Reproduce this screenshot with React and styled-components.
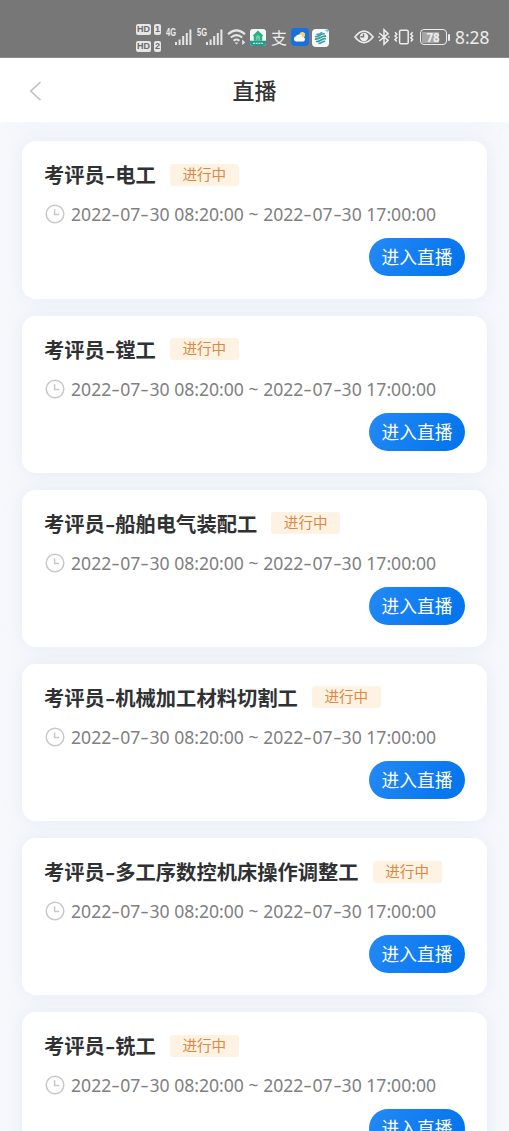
import React from "react";
import styled, { createGlobalStyle } from "styled-components";

const LIVE_LIST = [
  { id: 1, role: "考评员", job: "电工" },
  { id: 2, role: "考评员", job: "镗工" },
  { id: 3, role: "考评员", job: "船舶电气装配工" },
  { id: 4, role: "考评员", job: "机械加工材料切割工" },
  { id: 5, role: "考评员", job: "多工序数控机床操作调整工" },
  { id: 6, role: "考评员", job: "铣工" },
];

const START = { date: "2022-07-30", time: "08:20:00" };
const END = { date: "2022-07-30", time: "17:00:00" };

const Signal = () => (
  <svg width="18" height="17" viewBox="0 0 18 17" fill="#e6e6e6">
    <rect x="0" y="13" width="2" height="3" />
    <rect x="3.6" y="10.5" width="2" height="5.5" />
    <rect x="7.2" y="7" width="2" height="9" />
    <rect x="10.8" y="4" width="2" height="12" />
    <rect x="14.4" y="0.5" width="2" height="15.5" />
  </svg>
);

const Wifi = () => (
  <svg width="20" height="18" viewBox="0 0 20 18" fill="none" stroke="#e6e6e6" strokeWidth="2">
    <path d="M1 6.2Q9.5-1.4 18 6.2M3.8 9.6q5.7-5 11.4 0M6.6 12.7q2.9-2.4 5.8 0" />
    <path d="M7.7 14.4h3.6l-1.8 2.2z" fill="#e6e6e6" stroke="none" />
    <path d="m15.2 11.6 3 2.8-3 2.6z" fill="#e6e6e6" stroke="none" />
  </svg>
);

const HomeApp = () => (
  <svg width="16" height="17" viewBox="0 0 16 17">
    <rect width="16" height="17" rx="3" fill="#f0f8f4" />
    <path d="m8 1.6 5.2 4.8-1 1v4.4H3.8V7.4l-1-1z" fill="#31ad83" />
    <path d="M8 5.8 6 7.8v4h1.4V9.5h1.2v2.3H10v-4z" fill="#6fceab" />
    <path d="M0 11.8h16V14a3 3 0 0 1-3 3H3a3 3 0 0 1-3-3z" fill="#269b8b" />
    <path d="M3 14.3h10" stroke="#b9e6da" strokeWidth="1.3" strokeDasharray="2 .7" />
  </svg>
);

const WeatherApp = () => (
  <svg width="18" height="18" viewBox="0 0 18 18">
    <rect width="18" height="18" rx="4" fill="#1871df" />
    <circle cx="11.3" cy="6.8" r="2.8" fill="#f8d567" />
    <path d="M5.2 13.4a2.6 2.6 0 0 1-.3-5.1 3.5 3.5 0 0 1 6.5.9 2.1 2.1 0 1 1 .9 4.2z" fill="#fff" />
  </svg>
);

const MobileApp = () => (
  <svg width="18" height="19" viewBox="0 0 18 19">
    <rect y="1" width="17" height="18" rx="4" fill="#f5faf9" />
    <g fill="none" strokeWidth="1.7" strokeLinecap="round">
      <path d="M3.6 8.5c3 1 5.2-3.2 8.4-2.7M3.5 11.1c4 .7 6.2-3.8 9.9-2.9M4.7 13.5c3.6.4 5.6-3.9 8.7-2.8" stroke="#359c91" />
      <path d="M5 6.3c2 .7 3.2-1.1 4.8-1.4M7 15.3c2.2 0 3.7-2.3 5.5-1.9" stroke="#4c9fc6" />
    </g>
    <path d="m15.2 0 .7 1.8 1.9.7-1.9.7-.7 1.9-.7-1.9-1.9-.7 1.9-.7z" fill="#73cae9" />
  </svg>
);

const Eye = () => (
  <svg width="20" height="14" viewBox="0 0 20 14">
    <path d="M1 7q9-11.6 18 0Q10 18.2 1 7z" fill="none" stroke="#ededed" strokeWidth="1.7" />
    <circle cx="10" cy="7" r="4.2" fill="#ededed" />
    <path d="M9.5 3.7v3.1H6.4" fill="none" stroke="#777" strokeWidth="1.5" />
  </svg>
);

const Bluetooth = () => (
  <svg width="12" height="18" viewBox="0 0 12 18" fill="none" stroke="#ededed" strokeWidth="1.5">
    <path d="m1.3 5 8.8 7.4L6 16.3V1.7l4.1 3.9L1.3 13" />
    <path d="M.3 9h1.5M10.2 9h1.5" />
  </svg>
);

const Vibrate = () => (
  <svg width="20" height="16" viewBox="0 0 20 16" fill="none" stroke="#ededed" strokeWidth="1.5">
    <rect x="5.6" y="1.2" width="8.6" height="13.6" rx="1.3" />
    <path d="m1 3.3 1.8 1.9L1 7l1.8 1.8L1 10.6l1.8 1.9M18.6 3.3l-1.8 1.9L18.6 7l-1.8 1.8 1.8 1.8-1.8 1.9" />
  </svg>
);

const Clock = () => (
  <svg width="20" height="20" viewBox="0 0 20 20" fill="none" stroke="#c8c8c8" strokeWidth="1.5">
    <circle cx="10" cy="10" r="8.8" />
    <path d="M9.6 5.3v5.2h4.6" />
  </svg>
);

const BackArrow = () => (
  <svg width="14" height="22" viewBox="0 0 14 22" fill="none" stroke="#c4c4c4" strokeWidth="1.7">
    <path d="M12.5 2 2.7 11.1l9.8 9.1" />
  </svg>
);

// 日期中的连字符需要加宽
const DateText = ({ value }) =>
  value.split("-").map((part, index) => (
    <React.Fragment key={index}>
      {index > 0 && <Dash $width={9} $scale={1.5}>-</Dash>}
      {part}
    </React.Fragment>
  ));

const LiveCard = ({ role, job }) => (
  <Card>
    <TitleRow>
      <Title>
        {role}
        <Dash $width={10.4} $scale={1.4}>-</Dash>
        {job}
      </Title>
      <Tag>进行中</Tag>
    </TitleRow>
    <TimeRow>
      <Clock />
      <Time>
        <DateText value={START.date} /> {START.time} ~ <DateText value={END.date} /> {END.time}
      </Time>
    </TimeRow>
    <EnterButton>进入直播</EnterButton>
  </Card>
);

const App = () => (
  <Page>
    <GlobalStyle />
    <StatusBar>
      <SimCards>
        <Sim><b>HD</b><i>1</i></Sim>
        <Sim><b>HD</b><i>2</i></Sim>
      </SimCards>
      <Network>4G</Network>
      <Signal />
      <Network>5G</Network>
      <Signal />
      <Slot $left={3}><Wifi /></Slot>
      <Slot $left={3}><HomeApp /></Slot>
      <Pay>支</Pay>
      <Slot $left={4}><WeatherApp /></Slot>
      <Slot $left={3}><MobileApp /></Slot>
      <Slot $left={24}><Eye /></Slot>
      <Slot $left={4}><Bluetooth /></Slot>
      <Slot $left={4}><Vibrate /></Slot>
      <Battery><span>78</span></Battery>
      <BatteryTip />
      <Now>8:28</Now>
    </StatusBar>
    <Header>
      <BackButton><BackArrow /></BackButton>
      <HeaderTitle>直播</HeaderTitle>
    </Header>
    <List>
      <CardEnd />
      {LIVE_LIST.map((item) => (
        <LiveCard key={item.id} role={item.role} job={item.job} />
      ))}
    </List>
  </Page>
);

export default App;

const GlobalStyle = createGlobalStyle`
  body {
    margin: 0;
    font-family: "Noto Sans CJK SC", sans-serif;
  }
  * {
    box-sizing: border-box;
  }
  svg {
    display: block;
    flex: none;
  }
`;

const Page = styled.div`
  display: flex;
  flex-direction: column;
  height: 1131px;
  overflow: hidden;
  background: #f6f8fc;
`;

const StatusBar = styled.div`
  display: flex;
  align-items: center;
  flex: none;
  height: 58px;
  padding: 17px 0 0 136px;
  background: #777777;
  border-bottom: 1px solid #8b8b8b;
  color: #ededed;
`;

const SimCards = styled.div`
  display: flex;
  flex-direction: column;
  gap: 6px;
  width: 26px;
  padding-top: 1px;
`;

const Sim = styled.div`
  display: flex;
  gap: 3px;
  height: 11px;
  font: 700 9px/11px "Liberation Sans", sans-serif;
  color: #6c6c6c;

  b, i {
    background: #e6e6e6;
    border-radius: 2px;
    text-align: center;
    font-style: normal;
  }
  b {
    width: 15px;
  }
  i {
    width: 7px;
  }
`;

const Network = styled.span`
  width: 9px;
  margin: 0 0 9px 4px;
  font: 700 10px/10px "Liberation Sans Narrow", "Liberation Sans", sans-serif;
  white-space: nowrap;
  transform: scaleX(0.75);
  transform-origin: left;
`;

const Slot = styled.span`
  margin-left: ${(props) => props.$left}px;
`;

const Pay = styled.span`
  margin-left: 5px;
  width: 16px;
  font-size: 16px;
  line-height: 20px;
`;

const Battery = styled.div`
  display: flex;
  align-items: center;
  flex: none;
  width: 27px;
  height: 16px;
  margin-left: 6px;
  padding: 1px;
  border: 1.5px solid #ededed;
  border-radius: 4px;

  span {
    width: 22px;
    height: 11px;
    background: linear-gradient(90deg, #a5a5a5 78%, transparent 78%);
    border-radius: 1px;
    text-align: center;
    font: 700 11.5px/11px "Noto Sans", sans-serif;
  }
`;

const BatteryTip = styled.div`
  width: 2px;
  height: 7px;
  margin-left: 1px;
  border-radius: 1px;
  background: #ededed;
`;

const Now = styled.div`
  margin-left: 5px;
  padding-top: 2px;
  font: 400 17.3px/22px "Noto Sans", sans-serif;
`;

const Header = styled.header`
  display: grid;
  grid-template-columns: 60px 1fr 60px;
  align-items: center;
  flex: none;
  height: 64px;
  background: #ffffff;
`;

const BackButton = styled.button`
  display: flex;
  padding: 1px 0 0 28px;
  border: 0;
  background: none;
`;

const HeaderTitle = styled.h1`
  margin: 0 0 2px;
  text-align: center;
  font-size: 22px;
  font-weight: 500;
  line-height: 32px;
  color: #333333;
`;

const List = styled.main`
  display: flex;
  flex-direction: column;
  gap: 17px;
  flex: 1;
  min-height: 0;
  padding: 0 22px;
  overflow: hidden;
`;

const Card = styled.section`
  display: flex;
  flex-direction: column;
  flex: none;
  height: 157.2px;
  padding: 19px 22px 0;
  border-radius: 14px;
  background: #ffffff;
  box-shadow: 0 0 18px rgba(206, 216, 234, 0.38);
`;

// 上一张卡片滚动后露出的底边
const CardEnd = styled.div`
  flex: none;
  height: 2.4px;
  background: #f5f6fc;
  box-shadow: 0 0 18px rgba(200, 208, 244, 0.5);
`;

const TitleRow = styled.div`
  display: flex;
  align-items: center;
  height: 28px;
`;

const Title = styled.h2`
  margin: 0;
  font-size: 20.3px;
  font-weight: 700;
  line-height: 28px;
  white-space: nowrap;
  color: #303133;
`;

const Dash = styled.span`
  display: inline-block;
  width: ${(props) => props.$width}px;
  text-align: center;
  transform: scaleX(${(props) => props.$scale});
`;

const Tag = styled.span`
  width: 69px;
  height: 22px;
  margin: 1px 0 0 14px;
  border-radius: 3px;
  background: #fef3e2;
  color: #dd8645;
  text-align: center;
  font-size: 14.6px;
  line-height: 20px;
`;

const TimeRow = styled.div`
  display: flex;
  align-items: center;
  gap: 6px;
  height: 26px;
  margin-top: 13px;
  padding-left: 1px;
`;

const Time = styled.span`
  font-family: "Noto Sans", sans-serif;
  font-size: 17.6px;
  line-height: 26px;
  white-space: nowrap;
  color: #808080;
`;

const EnterButton = styled.button`
  align-self: flex-end;
  width: 96px;
  height: 38px;
  margin-top: 11px;
  padding: 0 0 1px;
  border: 0;
  border-radius: 19px;
  background: linear-gradient(120deg, #2489f5, #0073ec);
  color: #ffffff;
  font-family: "Noto Sans CJK SC", sans-serif;
  font-size: 17.7px;
  line-height: 37px;
`;
